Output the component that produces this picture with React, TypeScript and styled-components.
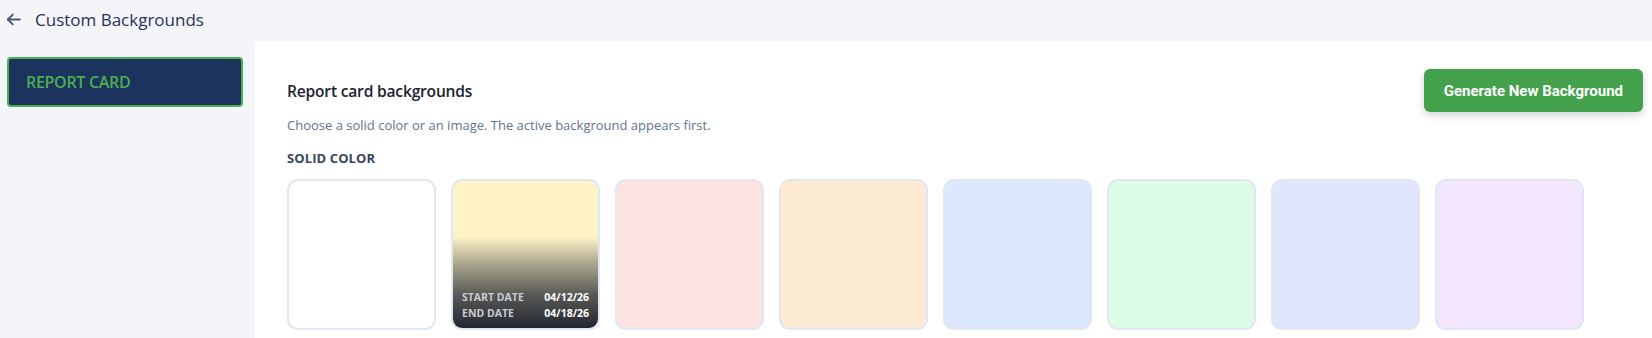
import React from 'react';
import styled, { createGlobalStyle } from 'styled-components';

const GlobalStyle = createGlobalStyle`
  html, body {
    margin: 0;
    padding: 0;
    background: #f4f5f9;
    font-family: "Open Sans", "Noto Sans", sans-serif;
    overflow: hidden;
  }
`;

type Swatch = {
  id: string;
  color: string;
  active?: boolean;
};

const swatches: Swatch[] = [
  { id: 'white', color: '#ffffff' },
  { id: 'amber', color: '#fef3c7', active: true },
  { id: 'red', color: '#fde2e2' },
  { id: 'orange', color: '#feebd4' },
  { id: 'blue', color: '#dce8fd' },
  { id: 'green', color: '#dcfce8' },
  { id: 'indigo', color: '#e0e6fd' },
  { id: 'purple', color: '#f2e7fe' },
];

const Page = styled.div`
  display: flex;
  flex-direction: column;
  height: 338px;
`;

const TopBar = styled.header`
  display: flex;
  align-items: center;
  gap: 13px;
  height: 41px;
  padding: 0 0 2px 4px;
  box-sizing: border-box;
`;

const BackButton = styled.button`
  display: flex;
  align-items: center;
  justify-content: center;
  width: 18px;
  height: 18px;
  padding: 0;
  border: 0;
  background: none;
  color: #4a5478;
  cursor: pointer;
`;

const PageTitle = styled.h1`
  margin: 0;
  font-size: 17px;
  font-weight: 500;
  color: #27315a;
`;

const Body = styled.div`
  display: flex;
  flex: 1;
  min-height: 0;
`;

const Sidebar = styled.nav`
  width: 255px;
  flex-shrink: 0;
  padding: 16px 12px 0 7px;
  box-sizing: border-box;
`;

const NavItem = styled.div<{ $active?: boolean }>`
  display: flex;
  align-items: center;
  height: 50px;
  padding: 0 17px;
  box-sizing: border-box;
  border-radius: 4px;
  border: 2px solid ${(p) => (p.$active ? '#4caf50' : 'transparent')};
  background: ${(p) => (p.$active ? '#1c345d' : 'transparent')};
  color: #4caf50;
  font-size: 16px;
  font-weight: 600;
  letter-spacing: -0.3px;
`;

const Panel = styled.main`
  flex: 1;
  background: #ffffff;
  padding: 28px 9px 0 32px;
  box-sizing: border-box;
  overflow: hidden;
`;

const PanelHead = styled.div`
  display: flex;
  align-items: center;
  justify-content: space-between;
`;

const SectionTitle = styled.h2`
  margin: 0;
  font-size: 15.6px;
  font-weight: 600;
  color: #1b2233;
  letter-spacing: -0.2px;
`;

const PrimaryButton = styled.button`
  height: 43px;
  padding: 0 20px;
  border: 0;
  border-radius: 6px;
  background: #43a14b;
  color: #ffffff;
  font-family: Roboto, "Liberation Sans", sans-serif;
  font-size: 15px;
  font-weight: 700;
  box-shadow: 0 3px 8px rgba(0, 0, 0, 0.18);
  cursor: pointer;
`;

const Hint = styled.p`
  margin: 4px 0 0;
  font-size: 13px;
  color: #66728a;
`;

const GroupLabel = styled.div`
  margin-top: 15px;
  font-size: 13px;
  font-weight: 700;
  color: #3a4456;
  letter-spacing: 0.1px;
`;

const SwatchRow = styled.div`
  display: flex;
  gap: 15px;
  margin-top: 12px;
`;

const SwatchCard = styled.div<{ $color: string }>`
  position: relative;
  width: 149px;
  height: 151px;
  flex-shrink: 0;
  box-sizing: border-box;
  border: 2px solid #e1e7f1;
  border-radius: 11px;
  background: ${(p) => p.$color};
  overflow: hidden;
  display: flex;
  flex-direction: column;
  justify-content: flex-end;
`;

const Preview = styled.div`
  position: absolute;
  inset: 0;
  background: linear-gradient(
    to bottom,
    rgba(30, 34, 46, 0) 38%,
    rgba(30, 34, 46, 0.35) 55%,
    rgba(30, 34, 46, 0.75) 78%,
    rgba(30, 34, 46, 0.98) 100%
  );
`;

const DateList = styled.div`
  position: relative;
  display: flex;
  flex-direction: column;
  gap: 2px;
  padding: 0 9px 8px 9px;
`;

const DateRow = styled.div`
  display: flex;
  justify-content: space-between;
  font-size: 10.5px;
  font-weight: 700;
  line-height: 14px;
`;

const DateLabel = styled.span`
  color: #c9ccd3;
`;

const DateValue = styled.span`
  color: #ffffff;
`;

function ArrowLeft() {
  return (
    <svg width="17" height="17" viewBox="0 0 24 24" fill="none" stroke="currentColor" strokeWidth="2.6" strokeLinecap="round" strokeLinejoin="round">
      <path d="M21 12H4" />
      <path d="M11 5l-7 7 7 7" />
    </svg>
  );
}

export default function App() {
  return (
    <Page>
      <GlobalStyle />
      <TopBar>
        <BackButton aria-label="Back">
          <ArrowLeft />
        </BackButton>
        <PageTitle>Custom Backgrounds</PageTitle>
      </TopBar>
      <Body>
        <Sidebar>
          <NavItem $active>REPORT CARD</NavItem>
        </Sidebar>
        <Panel>
          <PanelHead>
            <SectionTitle>Report card backgrounds</SectionTitle>
            <PrimaryButton>Generate New Background</PrimaryButton>
          </PanelHead>
          <Hint>Choose a solid color or an image. The active background appears first.</Hint>
          <GroupLabel>SOLID COLOR</GroupLabel>
          <SwatchRow>
            {swatches.map((s) => (
              <SwatchCard key={s.id} $color={s.color}>
                {s.active && (
                  <>
                    <Preview />
                    <DateList>
                      <DateRow>
                        <DateLabel>START DATE</DateLabel>
                        <DateValue>04/12/26</DateValue>
                      </DateRow>
                      <DateRow>
                        <DateLabel>END DATE</DateLabel>
                        <DateValue>04/18/26</DateValue>
                      </DateRow>
                    </DateList>
                  </>
                )}
              </SwatchCard>
            ))}
          </SwatchRow>
        </Panel>
      </Body>
    </Page>
  );
}
